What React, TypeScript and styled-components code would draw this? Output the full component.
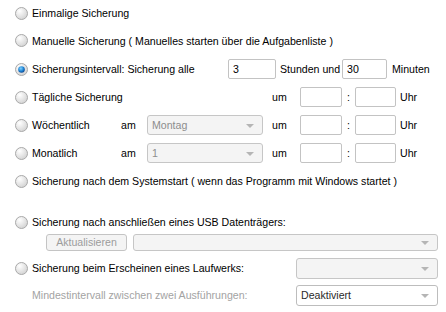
import React from "react";
import styled, { createGlobalStyle } from "styled-components";

const Global = createGlobalStyle`
  html, body { margin: 0; padding: 0; background: #ffffff; }
  body { font-family: "Liberation Sans", Arial, sans-serif; font-size: 10.6px; color: #000; }
`;

const Page = styled.div`
  width: 446px;
  height: 312px;
  display: flex;
  flex-direction: column;
  padding-left: 15px;
  box-sizing: border-box;
  overflow: hidden;
`;

const Row = styled.div<{ $h?: number; $mt?: number }>`
  height: ${(p) => p.$h ?? 28}px;
  margin-top: ${(p) => p.$mt ?? 0}px;
  display: flex;
  align-items: center;
`;

const Label = styled.span<{ $w?: number; $muted?: boolean; $pl?: number }>`
  white-space: nowrap;
  ${(p) => (p.$w ? `width: ${p.$w}px; flex: none;` : "")}
  padding-left: ${(p) => p.$pl ?? 0}px;
  box-sizing: border-box;
  color: ${(p) => (p.$muted ? "#a3a3a3" : "#000")};
`;

const RadioWrap = styled.span`
  width: 13px;
  height: 13px;
  flex: none;
  margin-right: 4px;
  display: inline-flex;
`;

const TimeGrid = styled.div`
  display: grid;
  grid-template-columns: 89px 26px 116px 37px 42px 13px 41px auto;
  align-items: center;
`;

const TextBox = styled.div<{ $w: number }>`
  width: ${(p) => p.$w}px;
  height: 20px;
  box-sizing: border-box;
  border: 1px solid #c3c3c3;
  border-radius: 2px;
  background: #fff;
  padding-left: 4px;
  display: flex;
  align-items: center;
  flex: none;
`;

const Combo = styled.div<{ $w: number; $h?: number; $enabled?: boolean }>`
  width: ${(p) => p.$w}px;
  height: ${(p) => p.$h ?? 20}px;
  box-sizing: border-box;
  border: 1px solid ${(p) => (p.$enabled ? "#bdbdbd" : "#c6c6c6")};
  border-radius: 3px;
  background: ${(p) => (p.$enabled ? "#ffffff" : "#f4f4f4")};
  color: ${(p) => (p.$enabled ? "#2a2a2a" : "#8d8d8d")};
  padding: 0 8px 0 4px;
  display: flex;
  align-items: center;
  justify-content: space-between;
  flex: none;
`;

const Arrow = styled.span`
  width: 0;
  height: 0;
  border-left: 4px solid transparent;
  border-right: 4px solid transparent;
  border-top: 4px solid #b5b5b5;
  margin-top: 1px;
`;

const Button = styled.div`
  width: 81px;
  height: 17px;
  box-sizing: border-box;
  border: 1px solid #c4c4c4;
  border-radius: 3px;
  background: #f4f4f4;
  color: #9c9c9c;
  display: flex;
  align-items: center;
  justify-content: center;
  margin-left: 31px;
  margin-right: 6px;
  flex: none;
`;

function Radio({ checked }: { checked?: boolean }) {
  const id = checked ? "rg-on" : "rg-off";
  return (
    <RadioWrap>
      <svg width="13" height="13" viewBox="0 0 13 13">
        <defs>
          <radialGradient id={id} cx="0.35" cy="0.3" r="0.8">
            <stop offset="0" stopColor="#ffffff" />
            <stop offset="1" stopColor="#cfcfcf" />
          </radialGradient>
          <radialGradient id="dot" cx="0.4" cy="0.35" r="0.7">
            <stop offset="0" stopColor="#7fd3ff" />
            <stop offset="0.6" stopColor="#1b7fd1" />
            <stop offset="1" stopColor="#0b3f86" />
          </radialGradient>
        </defs>
        <circle cx="6.5" cy="6.5" r="6" fill={`url(#${id})`} stroke="#a9a9a9" strokeWidth="1" />
        {checked && <circle cx="6.5" cy="6.5" r="3.3" fill="url(#dot)" />}
      </svg>
    </RadioWrap>
  );
}

function TimeInputs() {
  return (
    <>
      <Label $pl={9}>um</Label>
      <TextBox $w={42} />
      <Label $pl={5}>:</Label>
      <TextBox $w={41} />
      <Label $pl={4}>Uhr</Label>
    </>
  );
}

export default function App() {
  return (
    <>
      <Global />
      <Page>
        <Row $h={26}>
          <Radio />
          <Label>Einmalige Sicherung</Label>
        </Row>
        <Row $h={29}>
          <Radio />
          <Label>Manuelle Sicherung ( Manuelles starten über die Aufgabenliste )</Label>
        </Row>
        <Row>
          <Radio checked />
          <Label $w={196}>Sicherungsintervall: Sicherung alle</Label>
          <TextBox $w={48}>3</TextBox>
          <Label $w={66} $pl={4}>Stunden und</Label>
          <TextBox $w={45}>30</TextBox>
          <Label $pl={5}>Minuten</Label>
        </Row>
        <Row>
          <Radio />
          <TimeGrid>
            <Label style={{ gridColumn: "1 / 4" }}>Tägliche Sicherung</Label>
            <TimeInputs />
          </TimeGrid>
        </Row>
        <Row>
          <Radio />
          <TimeGrid>
            <Label>Wöchentlich</Label>
            <Label>am</Label>
            <Combo $w={116}>
              <span>Montag</span>
              <Arrow />
            </Combo>
            <TimeInputs />
          </TimeGrid>
        </Row>
        <Row>
          <Radio />
          <TimeGrid>
            <Label>Monatlich</Label>
            <Label>am</Label>
            <Combo $w={116}>
              <span>1</span>
              <Arrow />
            </Combo>
            <TimeInputs />
          </TimeGrid>
        </Row>
        <Row>
          <Radio />
          <Label>Sicherung nach dem Systemstart ( wenn das Programm mit Windows startet )</Label>
        </Row>
        <Row $h={22} $mt={16}>
          <Radio />
          <Label>Sicherung nach anschließen eines USB Datenträgers:</Label>
        </Row>
        <Row $h={18}>
          <Button>Aktualisieren</Button>
          <Combo $w={305} $h={17}>
            <span />
            <Arrow />
          </Combo>
        </Row>
        <Row $h={22} $mt={6}>
          <Radio />
          <Label $w={264}>Sicherung beim Erscheinen eines Laufwerks:</Label>
          <Combo $w={142} $h={21}>
            <span />
            <Arrow />
          </Combo>
        </Row>
        <Row $h={22} $mt={5}>
          <Label $w={281} $muted $pl={17}>Mindestintervall zwischen zwei Ausführungen:</Label>
          <Combo $w={142} $h={21} $enabled>
            <span>Deaktiviert</span>
            <Arrow />
          </Combo>
        </Row>
      </Page>
    </>
  );
}
